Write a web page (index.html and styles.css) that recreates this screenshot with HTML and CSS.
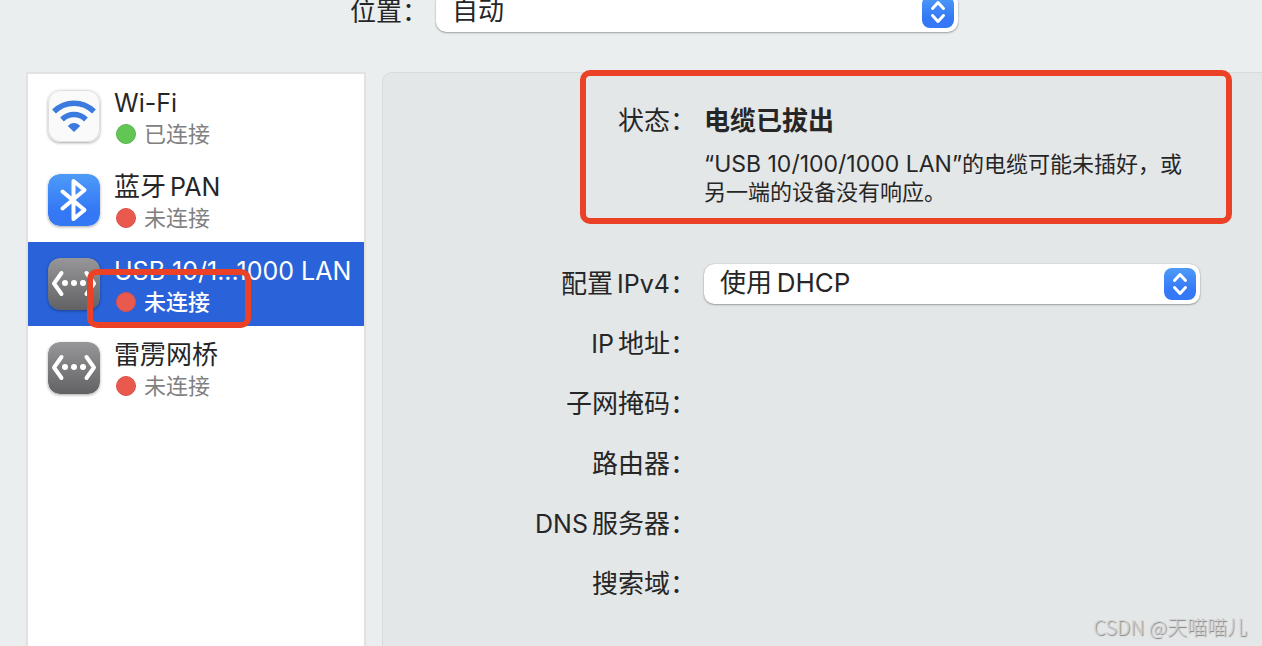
FILE: index.html
```html
<!DOCTYPE html>
<html lang="zh-CN">
<head>
<meta charset="utf-8">
<meta name="viewport" content="width=device-width, initial-scale=1">
<title>网络</title>
<link rel="stylesheet" href="styles.css">
</head>
<body>
<svg width="0" height="0" class="defs" aria-hidden="true">
  <defs>
    <linearGradient id="blue" x1="0" y1="0" x2="0" y2="1"><stop offset="0" stop-color="#4d9bf8"/><stop offset=".7" stop-color="#3478f6"/></linearGradient>
    <linearGradient id="gray" x1="0" y1="0" x2="0" y2="1"><stop offset="0" stop-color="#979799"/><stop offset="1" stop-color="#626264"/></linearGradient>
    <symbol id="ethernet" viewBox="0 0 52 52">
      <rect width="52" height="52" rx="12" fill="url(#gray)"/>
      <path d="M13.500 15L6 25.500l7.500 10.500M38.500 15L46 25.500 38.500 36" fill="none" stroke="#fff" stroke-width="4" stroke-linecap="round" stroke-linejoin="round"/>
      <circle cx="17" cy="25" r="3" fill="#fff"/><circle cx="26" cy="25" r="3" fill="#fff"/><circle cx="35" cy="25" r="3" fill="#fff"/>
    </symbol>
    <symbol id="stepper" viewBox="0 0 32 32">
      <rect width="32" height="32" rx="8" fill="url(#blue)"/>
      <path d="M10.500 12.500L16 6.500l5.500 6M10.500 19.500l5.500 6 5.500-6" fill="none" stroke="#fff" stroke-width="3" stroke-linecap="round" stroke-linejoin="round"/>
    </symbol>
  </defs>
</svg>
<div class="window">
  <header class="location">
    <label for="location">位置：</label>
    <div class="popup">
      <select id="location"><option>自动</option></select>
      <svg class="stepper" aria-hidden="true"><use href="#stepper"/></svg>
    </div>
  </header>
  <main class="content">
    <nav class="services" aria-label="网络服务">
      <button class="service" type="button">
        <svg class="icon" viewBox="0 0 52 52" aria-hidden="true">
          <rect x=".5" y=".5" width="51" height="51" rx="12" fill="#fafafa" stroke="#dedede"/>
          <g fill="none" stroke="#3b7ade" stroke-width="5.500"><path d="M6 21.500c11.500-11 28.500-11 40 0"/><path d="M14 29.500c7-6.600 17-6.600 24 0"/></g>
          <path d="M19.800 36c3.500-4 8.900-4 12.400 0L26 42z" fill="#3b7ade"/>
        </svg>
        <span class="info"><span class="name"><span class="latin">Wi-Fi</span></span><span class="state"><i class="dot on"></i>已连接</span></span>
      </button>
      <button class="service" type="button">
        <svg class="icon" viewBox="0 0 52 52" aria-hidden="true">
          <rect width="52" height="52" rx="12" fill="url(#blue)"/>
          <path d="M14.500 17.500L36.500 36 25.500 45V7L36.500 16 14.500 34.500" fill="none" stroke="#fff" stroke-width="4" stroke-linecap="round" stroke-linejoin="round"/>
        </svg>
        <span class="info"><span class="name">蓝牙<span class="latin after">PAN</span></span><span class="state"><i class="dot"></i>未连接</span></span>
      </button>
      <button class="service selected" type="button" aria-current="true">
        <svg class="icon" aria-hidden="true"><use href="#ethernet"/></svg>
        <span class="info"><span class="name"><span class="latin">USB 10/1...1000 LAN</span></span><span class="state"><i class="dot"></i>未连接</span></span>
        <span class="mark mark-state"></span>
      </button>
      <button class="service" type="button">
        <svg class="icon" aria-hidden="true"><use href="#ethernet"/></svg>
        <span class="info"><span class="name">雷雳网桥</span><span class="state"><i class="dot"></i>未连接</span></span>
      </button>
    </nav>
    <section class="panel">
      <div class="row status">
        <span class="label">状态：</span>
        <div>
          <strong class="headline">电缆已拔出</strong>
          <p class="detail"><span class="latin-small">“USB 10/100/1000 LAN”</span>的电缆可能未插好，或<br>另一端的设备没有响应。</p>
        </div>
        <span class="mark mark-status"></span>
      </div>
      <div class="row">
        <label class="label" for="ipv4">配置<span class="latin after">IPv4</span>：</label>
        <div class="popup">
          <select id="ipv4"><option>使用&#8201;DHCP</option></select>
          <svg class="stepper" aria-hidden="true"><use href="#stepper"/></svg>
        </div>
      </div>
      <div class="row"><span class="label"><span class="latin before">IP</span>地址：</span></div>
      <div class="row"><span class="label">子网掩码：</span></div>
      <div class="row"><span class="label">路由器：</span></div>
      <div class="row"><span class="label"><span class="latin before">DNS</span>服务器：</span></div>
      <div class="row"><span class="label">搜索域：</span></div>
    </section>
  </main>
  <div class="watermark">CSDN @天喵喵儿</div>
</div>
</body>
</html>
```
FILE: styles.css
```css
* { box-sizing: border-box; }
body {
  margin: 0;
  background: #ebeeef;
  color: #262626;
  font: 26px/32px Inter, "Noto Sans CJK SC", sans-serif;
}
.defs { position: absolute; }
.window {
  position: relative;
  display: flex;
  flex-direction: column;
  min-height: 100vh;
  overflow: hidden;
}
.location {
  display: flex;
  align-items: center;
  margin-top: -8px;
  padding: 0 304px 0 350px;
}
.location label { flex: none; width: 86px; }
.location .popup { flex: 1; }
.popup { position: relative; }
.popup select {
  display: block;
  width: 100%;
  height: 40px;
  padding: 0 48px 2px 16px;
  appearance: none;
  border: 0;
  border-radius: 10px;
  background: #fff;
  box-shadow: 0 0 1px rgba(0, 0, 0, .35), 0 1px 2px rgba(0, 0, 0, .3);
  color: inherit;
  font: inherit;
}
.stepper {
  position: absolute;
  top: 4px;
  right: 4px;
  width: 32px;
  height: 32px;
  pointer-events: none;
}
.content {
  flex: 1;
  display: flex;
  gap: 16px;
  margin-top: 40px;
  padding-left: 26px;
}
.services {
  flex: none;
  width: 340px;
  border: 2px solid #e2e2e2;
  border-bottom: 0;
  background: #fff;
}
.service {
  position: relative;
  display: flex;
  gap: 14px;
  width: 100%;
  height: 84px;
  padding: 14px 0 0 20px;
  border: 0;
  background: none;
  color: inherit;
  font: inherit;
  text-align: left;
}
.icon {
  flex: none;
  width: 52px;
  height: 52px;
  margin-top: 2px;
  border-radius: 12px;
  box-shadow: 0 1px 3px rgba(0, 0, 0, .35);
}
.info { display: flex; flex-direction: column; white-space: nowrap; }
.name { line-height: 30px; }
.state {
  display: flex;
  align-items: center;
  gap: 8px;
  color: #808080;
  font-size: 22px;
  line-height: 32px;
  padding-left: 2px;
}
.dot {
  width: 20px;
  height: 20px;
  border: 1px solid #d9534a;
  border-radius: 50%;
  background: #e9594d;
}
.dot.on { border-color: #58b74c; background: #62c655; }
.selected { background: #2962d9; color: #fff; }
.selected .state { color: #fff; font-weight: 500; }
.latin { font-size: 25px; }
.latin-small { font-size: 23px; }
.after { margin-left: 4px; }
.before { margin-right: 4px; }
.panel {
  flex: 1;
  min-width: 0;
  border: 1px solid #d9dcdd;
  border-width: 1px 0 0 1px;
  border-radius: 10px 0 0 0;
  background: #e4e7e8;
}
.row {
  position: relative;
  display: grid;
  grid-template-columns: 313px minmax(0, 496px);
  gap: 8px;
  align-items: center;
  height: 60px;
}
.label { text-align: right; white-space: nowrap; }
.status {
  align-items: start;
  height: auto;
  padding: 32px 0 48px;
}
.headline { display: block; }
.detail { margin: 13px 0 0; font-size: 22px; line-height: 28px; }
.mark {
  position: absolute;
  border: 6px solid #eb4227;
  border-radius: 10px;
  pointer-events: none;
}
.mark-state { z-index: 1; top: 27px; left: 59px; width: 164px; height: 59px; }
.mark-status { top: -3px; left: 197px; width: 652px; height: 154px; }
.watermark {
  position: absolute;
  right: 15px;
  bottom: 4px;
  color: #d0d2d3;
  font-family: "Noto Sans CJK SC", sans-serif;
  font-size: 20px;
  font-weight: 300;
  line-height: 30px;
  text-shadow: 1px 1px 1px #808080;
}
```
